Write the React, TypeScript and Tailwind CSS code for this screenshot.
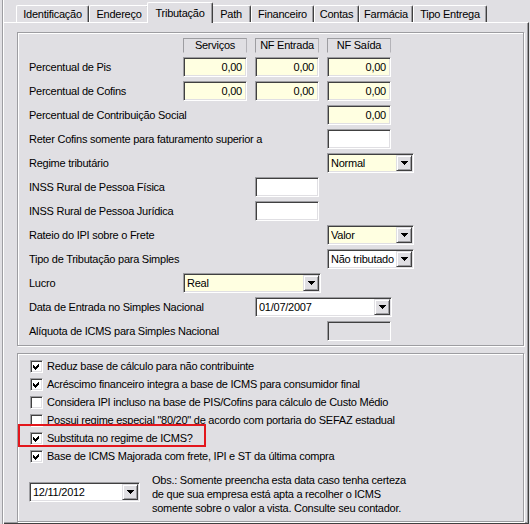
import React from "react";

const sunk =
  "border border-t-[#9d9da1] border-l-[#9d9da1] border-b-white border-r-white shadow-[inset_1px_1px_0_#404040,inset_-1px_-1px_0_#e0dfe3]";

function Field({ w, value = "", bg = "bg-[#ffffe1]" }: { w: string; value?: string; bg?: string }) {
  return (
    <div className={`${w} h-[20px] ${sunk} ${bg} flex items-center justify-end pr-[4px] whitespace-nowrap`}>
      {value}
    </div>
  );
}

function DropBtn() {
  return (
    <div className="w-[16px] h-[16px] shrink-0 bg-[#e0dfe3] border border-t-[#e0dfe3] border-l-[#e0dfe3] border-b-[#404040] border-r-[#404040] shadow-[inset_1px_1px_0_#ffffff,inset_-1px_-1px_0_#9d9da1] flex items-center justify-center">
      <svg width="7" height="4" viewBox="0 0 7 4" shapeRendering="crispEdges">
        <polygon points="0,0 7,0 3.5,4" fill="#000" />
      </svg>
    </div>
  );
}

function Combo({ w, value, bg = "bg-[#ffffe1]" }: { w: string; value: string; bg?: string }) {
  return (
    <div className={`${w} h-[20px] ${sunk} ${bg} flex items-center pl-[3px] pr-[1px]`}>
      <span className="flex-1 overflow-hidden whitespace-nowrap">{value}</span>
      <DropBtn />
    </div>
  );
}

function Check({ checked }: { checked: boolean }) {
  return (
    <div className={`w-[13px] h-[13px] shrink-0 bg-white ${sunk} flex items-center justify-center`}>
      {checked && (
        <svg width="9" height="9" viewBox="0 0 9 9" shapeRendering="crispEdges">
          <polygon points="1,3 3,5 7,1 7,4 3,8 1,6" fill="#000" />
        </svg>
      )}
    </div>
  );
}

function Header({ text }: { text: string }) {
  return (
    <div className="w-[64px] h-[15px] border border-t-[#9d9da1] border-l-[#9d9da1] border-r-[#b4b3b8] border-b-[#e0dfe3] flex items-center justify-center whitespace-nowrap">
      {text}
    </div>
  );
}

const tabs: [string, number][] = [
  ["Identificação", 73],
  ["Endereço", 60],
  ["Tributação", 62],
  ["Path", 40],
  ["Financeiro", 63],
  ["Contas", 45],
  ["Farmácia", 54],
  ["Tipo Entrega", 74],
];

function Tab({ label, width, active }: { label: string; width: number; active: boolean }) {
  if (active) {
    return (
      <div
        className="relative z-10 -mx-[2px] -mb-[1px] h-[21px] bg-[#e0dfe3] border-t border-l border-t-white border-l-white border-r border-r-[#404040] shadow-[inset_-1px_0_0_#9d9da1] rounded-t-[2px] flex justify-center pt-[3px] leading-[14px] whitespace-nowrap"
        style={{ width: width + 4 }}
      >
        {label}
      </div>
    );
  }
  return (
    <div
      className="h-[17px] bg-[#e0dfe3] border-t border-l border-t-white border-l-white border-r border-r-[#404040] shadow-[inset_-1px_0_0_#9d9da1] rounded-t-[2px] flex justify-center pt-[1px] leading-[14px] whitespace-nowrap"
      style={{ width }}
    >
      {label}
    </div>
  );
}

function Row({ label, children }: { label: string; children?: React.ReactNode }) {
  return (
    <div className="h-[24px] grid grid-cols-[154px_72px_72px_1fr] items-center">
      <div className="whitespace-nowrap">{label}</div>
      {children}
    </div>
  );
}

const checks: [string, boolean][] = [
  ["Reduz base de cálculo para não contribuinte", true],
  ["Acréscimo financeiro integra a base de ICMS para consumidor final", true],
  ["Considera IPI incluso na base de PIS/Cofins para cálculo de Custo Médio", false],
  ["Possui regime especial \"80/20\" de acordo com portaria do SEFAZ estadual", false],
  ["Substituta no regime de ICMS?", true],
  ["Base de ICMS Majorada com frete, IPI e ST da última compra", true],
];

const groupBox =
  "w-[507px] ml-[13px] border border-[#9d9da1] shadow-[inset_1px_1px_0_#ffffff,1px_1px_0_#ffffff]";

export default function App() {
  return (
    <div className="w-[530px] h-[524px] bg-[#e0dfe3] overflow-hidden text-black text-[11px] tracking-[-0.25px] font-['Liberation_Sans',Arial,sans-serif]">
      <div className="ml-[2px] h-full border-l border-l-[#9d9da1]">
        <div className="h-full border-l border-l-white flex flex-col">
          {/* tab strip */}
          <div className="h-[22px] flex items-end pl-[12px] shrink-0">
            {tabs.map(([l, w]) => (
              <Tab key={l} label={l} width={w} active={l === "Tributação"} />
            ))}
          </div>
          {/* page */}
          <div className="w-[525px] flex-1 border-t border-t-white border-r border-r-[#404040] border-b border-b-[#404040] shadow-[inset_-1px_-1px_0_#9d9da1]">
            {/* group 1 */}
            <div className={`${groupBox} mt-[9px] h-[314px] pt-[5px] pl-[11px]`}>
              <div className="h-[15px] grid grid-cols-[154px_72px_72px_1fr]">
                <div />
                <Header text="Serviços" />
                <Header text="NF Entrada" />
                <Header text="NF Saída" />
              </div>
              <div className="mt-[2px]">
                <Row label="Percentual de Pis">
                  <Field w="w-[64px]" value="0,00" />
                  <Field w="w-[64px]" value="0,00" />
                  <Field w="w-[64px]" value="0,00" />
                </Row>
                <Row label="Percentual de Cofins">
                  <Field w="w-[64px]" value="0,00" />
                  <Field w="w-[64px]" value="0,00" />
                  <Field w="w-[64px]" value="0,00" />
                </Row>
                <Row label="Percentual de Contribuição Social">
                  <div />
                  <div />
                  <Field w="w-[64px]" value="0,00" />
                </Row>
                <Row label="Reter Cofins somente para faturamento superior a">
                  <div />
                  <div />
                  <Field w="w-[64px]" bg="bg-white" />
                </Row>
                <Row label="Regime tributário">
                  <div />
                  <div />
                  <Combo w="w-[87px]" value="Normal" />
                </Row>
                <Row label="INSS Rural de Pessoa Física">
                  <div />
                  <Field w="w-[64px]" bg="bg-white" />
                </Row>
                <Row label="INSS Rural de Pessoa Jurídica">
                  <div />
                  <Field w="w-[64px]" bg="bg-white" />
                </Row>
                <Row label="Rateio do IPI sobre o Frete">
                  <div />
                  <div />
                  <Combo w="w-[87px]" value="Valor" />
                </Row>
                <Row label="Tipo de Tributação para Simples">
                  <div />
                  <div />
                  <Combo w="w-[87px]" value="Não tributado" bg="bg-white" />
                </Row>
                <Row label="Lucro">
                  <div className="col-span-2">
                    <Combo w="w-[138px]" value="Real" />
                  </div>
                </Row>
                <Row label="Data de Entrada no Simples Nacional">
                  <div />
                  <div className="col-span-2">
                    <Combo w="w-[137px]" value="01/07/2007" bg="bg-white" />
                  </div>
                </Row>
                <Row label="Alíquota de ICMS para Simples Nacional">
                  <div />
                  <div />
                  <Field w="w-[64px]" bg="bg-[#e0dfe3]" />
                </Row>
              </div>
            </div>
            {/* group 2 */}
            <div className={`${groupBox} relative mt-[7px] h-[169px] pt-[3px]`}>
              {checks.map(([t, c]) => (
                <div key={t} className="h-[18px] flex items-center gap-[4px] pl-[12px] whitespace-nowrap">
                  <Check checked={c} />
                  <span>{t}</span>
                </div>
              ))}
              <div className="flex items-start pl-[11px] mt-[8px]">
                <div className="mt-[9px]">
                  <Combo w="w-[111px]" value="12/11/2012" bg="bg-white" />
                </div>
                <div className="ml-[12px] leading-[14px] whitespace-nowrap">
                  <div>Obs.: Somente preencha esta data caso tenha certeza</div>
                  <div>de que sua empresa está apta a recolher o ICMS</div>
                  <div>somente sobre o valor a vista. Consulte seu contador.</div>
                </div>
              </div>
              <div className="absolute left-[0px] top-[70px] w-[188px] h-[23px] border-2 border-[#e3161c]" />
            </div>
          </div>
        </div>
      </div>
    </div>
  );
}
